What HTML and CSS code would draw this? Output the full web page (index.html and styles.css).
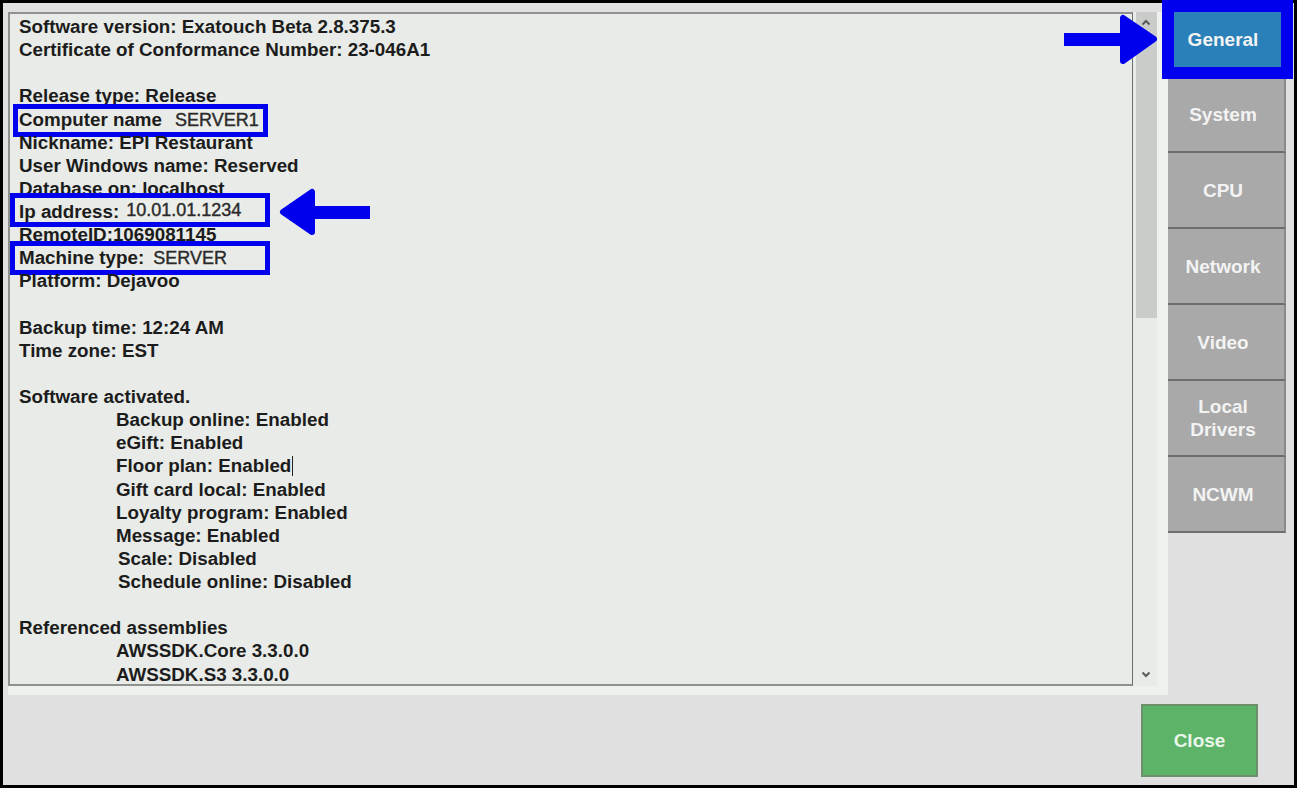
FILE: index.html
```html
<!DOCTYPE html>
<html lang="en">
<head>
<meta charset="utf-8">
<title>System information</title>
<link rel="stylesheet" href="styles.css">
</head>
<body>
<div class="frame">
  <div class="main">
    <div class="viewer">
      <div class="textbox">
        <div class="line">Software version: Exatouch Beta 2.8.375.3</div>
        <div class="line">Certificate of Conformance Number: 23-046A1</div>
        <div class="line"></div>
        <div class="line">Release type: Release</div>
        <div class="line hl hl-computer">Computer name<span class="val val-computer">SERVER1</span></div>
        <div class="line">Nickname: EPI Restaurant</div>
        <div class="line">User Windows name: Reserved</div>
        <div class="line">Database on: localhost</div>
        <div class="line hl hl-ip">Ip address:<span class="val val-ip">10.01.01.1234</span></div>
        <div class="line">RemoteID:1069081145</div>
        <div class="line hl hl-machine">Machine type:<span class="val val-machine">SERVER</span></div>
        <div class="line">Platform: Dejavoo</div>
        <div class="line"></div>
        <div class="line">Backup time: 12:24 AM</div>
        <div class="line">Time zone: EST</div>
        <div class="line"></div>
        <div class="line">Software activated.</div>
        <div class="line ind">Backup online: Enabled</div>
        <div class="line ind">eGift: Enabled</div>
        <div class="line ind">Floor plan: Enabled<span class="caret"></span></div>
        <div class="line ind">Gift card local: Enabled</div>
        <div class="line ind">Loyalty program: Enabled</div>
        <div class="line ind">Message: Enabled</div>
        <div class="line ind2">Scale: Disabled</div>
        <div class="line ind2">Schedule online: Disabled</div>
        <div class="line"></div>
        <div class="line">Referenced assemblies</div>
        <div class="line ind">AWSSDK.Core 3.3.0.0</div>
        <div class="line ind">AWSSDK.S3 3.3.0.0</div>
      </div>
      <div class="scroll">
        <div class="thumb">
          <svg class="chev-up" width="10" height="7" viewBox="0 0 10 7"><polyline points="1.5,5.5 5,2 8.5,5.5" fill="none" stroke="#5a5a5a" stroke-width="2"/></svg>
        </div>
        <div class="track"></div>
        <svg class="chev-down" width="10" height="7" viewBox="0 0 10 7"><polyline points="1.5,1.5 5,5 8.5,1.5" fill="none" stroke="#5a5a5a" stroke-width="2"/></svg>
      </div>
    </div>
    <div class="tabs">
      <div class="tab tab-active">General</div>
      <div class="tab">System</div>
      <div class="tab">CPU</div>
      <div class="tab">Network</div>
      <div class="tab">Video</div>
      <div class="tab">Local<br>Drivers</div>
      <div class="tab">NCWM</div>
    </div>
  </div>
  <div class="footer">
    <div class="close-btn">Close</div>
  </div>

  <div class="tab-highlight"></div>
  <svg class="arrows" width="1300" height="791" viewBox="0 0 1300 791">
    <rect x="312" y="206" width="58" height="13" fill="#0000ee"/>
    <polygon points="283,212 312,192 312,232" fill="#0000ee" stroke="#0000ee" stroke-width="6" stroke-linejoin="round"/>
    <rect x="1064" y="33" width="60" height="13" fill="#0000ee"/>
    <polygon points="1154,39 1123,18 1123,61" fill="#0000ee" stroke="#0000ee" stroke-width="6" stroke-linejoin="round"/>
  </svg>
</div>
</body>
</html>
```

FILE: styles.css
```css
* { box-sizing: border-box; }

html, body {
  margin: 0;
  padding: 0;
  background: #ffffff;
}

body {
  font-family: "Liberation Sans", Arial, sans-serif;
  width: 1300px;
  height: 791px;
  overflow: hidden;
}

.frame {
  position: relative;
  width: 1297px;
  height: 788px;
  border: 3px solid #000;
  background: #e0e0e0;
  display: flex;
  flex-direction: column;
}

.main {
  display: flex;
  align-items: flex-start;
  height: 692px;
  padding: 9px 0 0 5px;
}

.viewer {
  width: 1160px;
  height: 683px;
  background: #eef1ed;
  display: flex;
  align-items: flex-start;
}

.textbox {
  width: 1125px;
  height: 674px;
  background: #e8ebe7;
  border: 2px solid #8f918e;
  border-right: 1px solid #6c6e6b;
  padding: 1px 0 0 9px;
  overflow: hidden;
  color: #1c1c1c;
  font-size: 18.8px;
  font-weight: 700;
}

.line {
  height: 23.14px;
  line-height: 23.14px;
  white-space: nowrap;
  position: relative;
}

.ind { padding-left: 97px; }
.ind2 { padding-left: 99px; }

.caret {
  display: inline-block;
  width: 1px;
  height: 20px;
  background: #222;
  vertical-align: -4px;
  margin-left: 1px;
}

.hl::after {
  content: "";
  box-sizing: border-box;
  position: absolute;
  border: 5px solid #0000ee;
}

.hl-computer::after { left: -6px; top: -3.6px; width: 255px; height: 33px; }
.hl-ip::after { left: -9px; top: -7px; width: 260px; height: 34px; }
.hl-machine::after { left: -9px; top: -5.4px; width: 260px; height: 34px; }

.val {
  font-weight: 400;
  font-size: 18px;
  color: #2b2b2b;
  -webkit-text-stroke: 0.4px #2b2b2b;
  background: #eceeea;
}

.val-computer { margin-left: 13px; }
.val-ip { margin-left: 7px; position: relative; top: -2px; }
.val-machine { margin-left: 9px; }

.scroll {
  width: 24px;
  height: 674px;
  background: #e8ebe7;
  display: flex;
  flex-direction: column;
  align-items: center;
  padding-left: 2px;
}

.thumb {
  width: 21px;
  height: 306px;
  background: #c9ccc8;
  display: flex;
  justify-content: center;
  padding-top: 7px;
}

.track { flex: 1; }

.chev-up { display: block; }
.chev-down { display: block; margin-bottom: 8px; }

.tabs {
  width: 118px;
  display: flex;
  flex-direction: column;
}

.tab {
  height: 76px;
  background: #a9a9a9;
  border-bottom: 2px solid #6e6e6e;
  border-right: 2px solid #8a8a8a;
  color: #f3f3f3;
  font-size: 19px;
  font-weight: 700;
  line-height: 23px;
  text-align: center;
  display: flex;
  align-items: center;
  justify-content: center;
  padding-right: 6px;
}

.tab-active {
  height: 65px;
  background: #2a80b8;
  padding-bottom: 11px;
  border-bottom: none;
}

.footer {
  flex: 1;
  display: flex;
  justify-content: flex-end;
  align-items: flex-start;
  padding: 9px 36px 0 0;
}

.close-btn {
  width: 117px;
  height: 73px;
  background: #5db368;
  border: 2px solid #6c8f6c;
  color: #eaf6ea;
  font-size: 19px;
  font-weight: 700;
  display: flex;
  align-items: center;
  justify-content: center;
}

.tab-highlight {
  position: absolute;
  left: 1159px;
  top: -3px;
  width: 131px;
  height: 79px;
  border: 12px solid #0000ee;
}

.arrows {
  position: absolute;
  left: -3px;
  top: -3px;
  pointer-events: none;
}
```
